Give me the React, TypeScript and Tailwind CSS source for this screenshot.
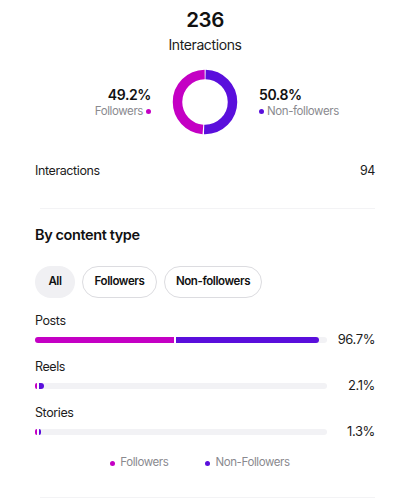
import React from "react";

const MAG = "#c400c4";
const PUR = "#5a0fdc";

function Donut() {
  const r = 27.5;
  const c = 2 * Math.PI * r;
  const half = c / 2;
  return (
    <svg width="66" height="66" viewBox="0 0 66 66">
      <g transform="rotate(-90 33 33)">
        <circle cx="33" cy="33" r={r} fill="none" stroke={PUR} strokeWidth="9.5"
          strokeDasharray={`${half * 1.016 - 1.2} ${c}`} strokeDashoffset={-0.6} />
        <circle cx="33" cy="33" r={r} fill="none" stroke={MAG} strokeWidth="9.5"
          strokeDasharray={`${half * 0.984 - 1.2} ${c}`} strokeDashoffset={-(half * 1.016 + 0.6)} />
      </g>
    </svg>
  );
}

function Bar({ label, mag, pur, pct }: { label: string; mag: number; pur: number; pct: string }) {
  return (
    <div className="flex flex-col">
      <div className="h-[20px] flex items-center text-[12.5px] text-[#1c1c1c]">{label}</div>
      <div className="flex items-center h-[18px]">
        <div className="w-[292px] h-[6px] bg-[#f2f2f5] rounded-full flex items-center">
          <div className="h-[6px] rounded-l-full" style={{ width: mag, background: MAG }} />
          <div className="w-[1.5px] h-[6px] bg-white" />
          <div className="h-[6px] rounded-r-full" style={{ width: pur, background: PUR }} />
        </div>
        <div className="flex-1 text-right text-[13px] text-[#1c1c1c]">{pct}</div>
      </div>
    </div>
  );
}

export default function App() {
  return (
    <div className="w-[400px] h-[500px] bg-white overflow-hidden tracking-[-0.025em]" style={{ fontFamily: "Inter, 'Noto Sans', sans-serif" }}>
      <div className="pl-[35px] pr-[25px]">
        <div className="flex flex-col items-center pt-[8px]">
          <div className="text-[20.5px] font-semibold text-[#111] leading-[24px]">236</div>
          <div className="text-[14px] text-[#1c1c1c] leading-[22px] mt-[2px]">Interactions</div>
          <div className="flex items-center mt-[13px] h-[66px]">
            <div className="w-[118px] flex flex-col items-end pr-[3px]">
              <div className="text-[14px] font-semibold text-[#111] leading-[18px]">49.2%</div>
              <div className="flex items-center gap-[3px] text-[11.5px] text-[#8a8a8f] leading-[15px]">
                Followers<span className="w-[5px] h-[5px] rounded-full" style={{ background: MAG }} />
              </div>
            </div>
            <div className="mx-[18px]"><Donut /></div>
            <div className="w-[118px] flex flex-col items-start pl-[3px]">
              <div className="text-[14px] font-semibold text-[#111] leading-[18px]">50.8%</div>
              <div className="flex items-center gap-[3px] text-[11.5px] text-[#8a8a8f] leading-[15px]">
                <span className="w-[5px] h-[5px] rounded-full" style={{ background: PUR }} />Non-followers
              </div>
            </div>
          </div>
        </div>
        <div className="flex justify-between items-center h-[20px] mt-[26px] text-[12.5px] text-[#1c1c1c]">
          <span>Interactions</span><span>94</span>
        </div>
        <div className="h-px bg-[#f3f3f5] mt-[27px] ml-[5px]" />
        <div className="text-[14.5px] font-semibold text-[#111] h-[20px] flex items-center mt-[16px]">By content type</div>
        <div className="flex gap-[7px] mt-[21px]">
          <div className="h-[32px] w-[40px] rounded-full bg-[#f0f0f3] flex items-center justify-center text-[11.5px] font-semibold text-[#111]">All</div>
          <div className="h-[32px] w-[75px] rounded-full border border-[#dcdce0] flex items-center justify-center text-[11.5px] font-semibold text-[#111]">Followers</div>
          <div className="h-[32px] w-[98px] rounded-full border border-[#dcdce0] flex items-center justify-center text-[11.5px] font-semibold text-[#111]">Non-followers</div>
        </div>
        <div className="flex flex-col gap-[8px] mt-[13px]">
          <Bar label="Posts" mag={139} pur={143} pct="96.7%" />
          <Bar label="Reels" mag={2} pur={5} pct="2.1%" />
          <Bar label="Stories" mag={2} pur={2} pct="1.3%" />
        </div>
        <div className="flex justify-center gap-[37px] mt-[14px] h-[16px] items-center text-[11.5px] text-[#8a8a8f] pr-[10px]">
          <div className="flex items-center gap-[5px]"><span className="w-[5px] h-[5px] rounded-full" style={{ background: MAG }} />Followers</div>
          <div className="flex items-center gap-[5px]"><span className="w-[5px] h-[5px] rounded-full" style={{ background: PUR }} />Non-Followers</div>
        </div>
        <div className="h-px bg-[#f3f3f5] mt-[26px] ml-[5px]" />
      </div>
    </div>
  );
}
